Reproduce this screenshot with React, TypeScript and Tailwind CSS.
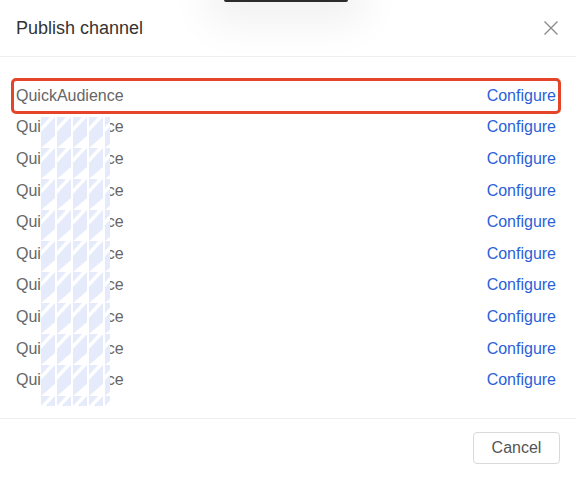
import React from "react";

const rows = Array.from({ length: 10 }, (_, i) => i);

function Redaction() {
  return (
    <svg
      className="absolute left-[41px] top-[117px]"
      width="69"
      height="289"
      viewBox="0 0 69 289"
    >
      <defs>
        <pattern id="hatch" width="16" height="31" patternUnits="userSpaceOnUse">
          <rect x="0" y="0" width="16" height="31" fill="#ffffff" />
          <polygon points="0,15 14,0 14,19 0,31" fill="#e6ebfc" />
          <polygon points="0,0 9,0 0,10" fill="#e6ebfc" />
        </pattern>
      </defs>
      <rect x="0" y="0" width="69" height="289" fill="url(#hatch)" />
    </svg>
  );
}

export default function App() {
  return (
    <div
      className="relative w-[576px] h-[478px] bg-white overflow-hidden"
      style={{ fontFamily: '"Liberation Sans", Arial, sans-serif' }}
    >
      {/* tooltip edge peeking at top */}
      <div className="absolute left-[224px] top-[-30px] w-[124px] h-[32px] bg-[#2b2b2b] rounded-[2px] shadow-[0_6px_40px_16px_rgba(0,0,0,0.06)]" />

      <div className="flex items-center justify-between h-[57px] pl-4 pr-[17px] border-b border-[#eeeeee]">
        <span className="text-[18px] text-[#333333] leading-none">Publish channel</span>
        <svg width="16" height="16" viewBox="0 0 16 16">
          <path d="M1.5 1.5 L14.5 14.5 M14.5 1.5 L1.5 14.5" stroke="#8c8c8c" strokeWidth="1.4" fill="none" />
        </svg>
      </div>

      <div className="flex flex-col pl-4 pr-5 pt-[23px] h-[361px]">
        {rows.map((i) => (
          <div key={i} className="relative flex items-center justify-between h-[31.6px] text-[16px]">
            {i === 0 && (
              <div className="absolute left-[-5px] right-[-5px] top-[-2px] bottom-[-2px] border-[3px] border-[#e5432a] rounded-[5px]" />
            )}
            <span className="text-[#666666]">QuickAudience</span>
            <span className="text-[#2b5fd9]">Configure</span>
          </div>
        ))}
      </div>

      <div className="border-t border-[#eeeeee] flex justify-end px-4 pt-[13px]">
        <button className="w-[87px] h-[32px] border border-[#d9d9d9] rounded-[4px] text-[16px] text-[#555555] bg-white">
          Cancel
        </button>
      </div>

      <Redaction />
    </div>
  );
}
